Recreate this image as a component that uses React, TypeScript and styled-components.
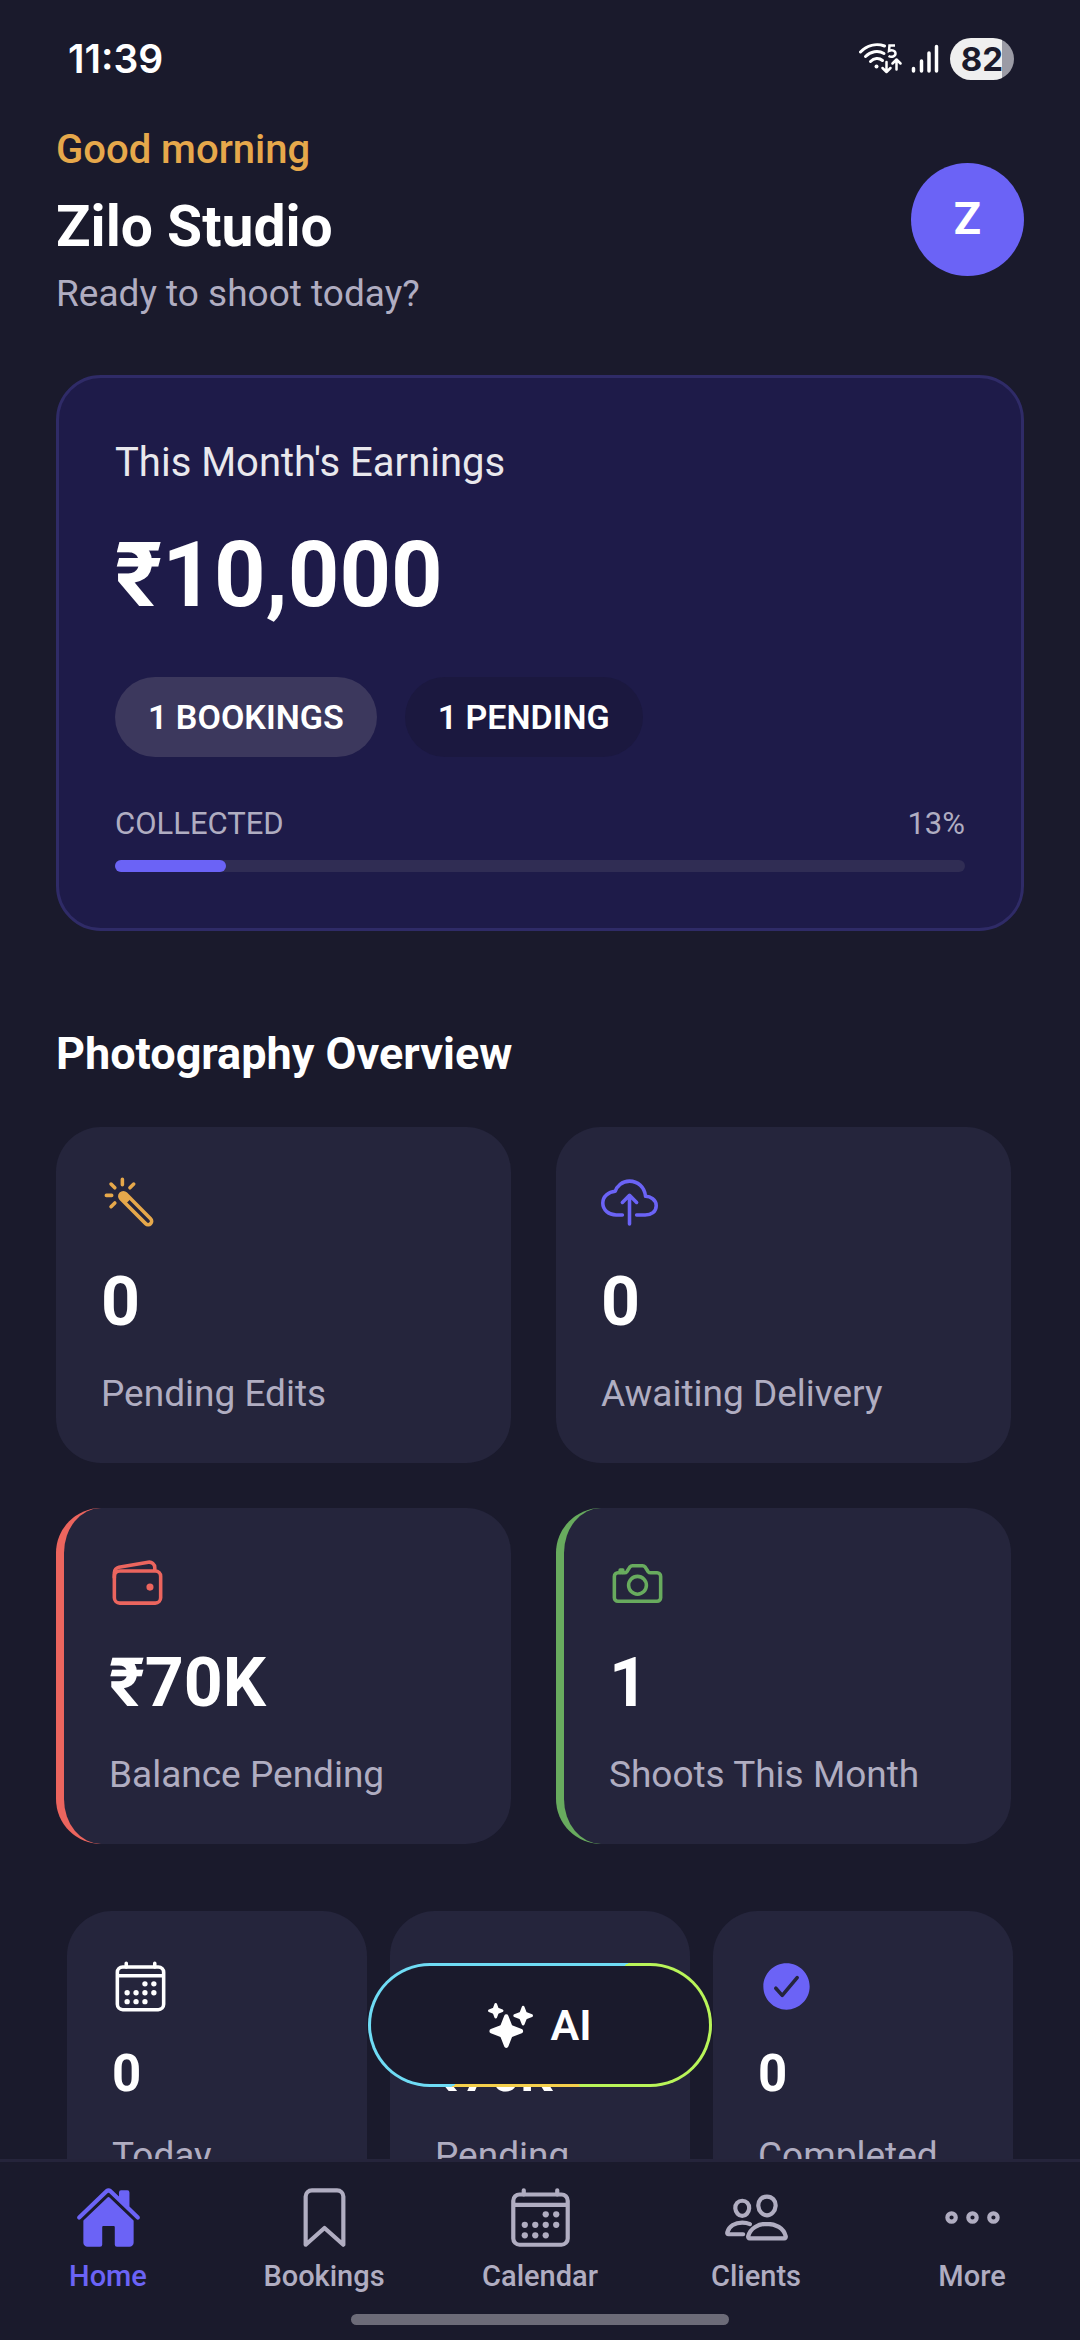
import React from "react";
import styled, { createGlobalStyle } from "styled-components";
import type { IconType } from "react-icons";
import {
  IoBookmarkOutline,
  IoCalendarOutline,
  IoCameraOutline,
  IoCheckmarkCircle,
  IoCloudUploadOutline,
  IoColorWandOutline,
  IoEllipsisHorizontalOutline,
  IoHome,
  IoPeopleOutline,
  IoSparkles,
  IoTimeOutline,
  IoWalletOutline,
} from "react-icons/io5";

const color = {
  page: "#1a1a2c",
  surface: "#25253c",
  hero: "#1e1b49",
  heroBorder: "#2f2b67",
  accent: "#6b63f6",
  amber: "#e6a84b",
  coral: "#ec655e",
  green: "#68ab5e",
  text: "#ffffff",
  muted: "#b0adc1",
};

const GlobalStyle = createGlobalStyle`
  *, *::before, *::after { box-sizing: border-box; }
  body {
    margin: 0;
    background: ${color.page};
    color: ${color.text};
    font-family: Roboto, "Noto Sans", sans-serif;
  }
  h1, h2, p { margin: 0; }
  button { font: inherit; color: inherit; border: 0; padding: 0; cursor: pointer; }
`;

const Screen = styled.div`
  display: flex;
  flex-direction: column;
  height: 100vh;
  background: ${color.page};
`;

/* Status bar */

const StatusBar = styled.div`
  display: flex;
  align-items: center;
  justify-content: space-between;
  padding: 38px 66px 0 68px;
`;

const Clock = styled.span`
  font-family: Inter, Roboto, sans-serif;
  font-size: 39px;
  font-weight: 600;
  line-height: 42px;
`;

const StatusIcons = styled.div`
  display: flex;
  align-items: center;
  gap: 9px;
`;

const Battery = styled.span`
  display: flex;
  align-items: center;
  justify-content: center;
  width: 64px;
  height: 42px;
  margin-left: 2px;
  border-radius: 21px;
  background: linear-gradient(to right, #efefef 82%, #9b9ba5 82%);
  color: ${color.page};
  font-family: Inter, Roboto, sans-serif;
  font-size: 33px;
  font-weight: 700;
  line-height: 42px;
`;

/* Scrolling content */

const Viewport = styled.div`
  position: relative;
  flex: 1;
  min-height: 0;
`;

const Content = styled.main`
  height: 100%;
  overflow-y: auto;
  scrollbar-width: none;
  padding: 42px 56px 160px;
`;

const Header = styled.header`
  display: flex;
  align-items: center;
  justify-content: space-between;
`;

const Greeting = styled.p`
  color: ${color.amber};
  font-size: 40px;
  font-weight: 500;
  line-height: 56px;
`;

const StudioName = styled.h1`
  margin: 16px 0 12px;
  font-size: 57px;
  font-weight: 700;
  line-height: 66px;
`;

const Prompt = styled.p`
  color: ${color.muted};
  font-size: 37px;
  line-height: 44px;
`;

const Avatar = styled.button`
  width: 113px;
  height: 113px;
  border-radius: 50%;
  background: ${color.accent};
  font-size: 45px;
  font-weight: 700;
  line-height: 54px;
`;

/* Earnings card */

const EarningsCard = styled.section`
  margin-top: 59px;
  padding: 56px;
  border: 3px solid ${color.heroBorder};
  border-radius: 45px;
  background: ${color.hero};
`;

const EarningsTitle = styled.h2`
  color: #e9e8ed;
  font-size: 40px;
  font-weight: 400;
  line-height: 58px;
`;

const Amount = styled.p`
  margin: 16px 0 33px;
  font-size: 90px;
  font-weight: 700;
  line-height: 136px;
`;

const Pills = styled.div`
  display: flex;
  gap: 28px;
`;

const Pill = styled.span<{ $dim?: boolean }>`
  padding: 0 33px;
  border-radius: 40px;
  background: ${({ $dim }) => ($dim ? "#1b183f" : "#3c385d")};
  font-size: 34px;
  font-weight: 600;
  line-height: 80px;
`;

const ProgressLabels = styled.div`
  display: flex;
  justify-content: space-between;
  margin: 44px 0 13px;
  color: ${color.muted};
  font-size: 31px;
  line-height: 46px;
`;

const Track = styled.div`
  height: 12px;
  border-radius: 6px;
  background: #302d54;
`;

const Fill = styled.div`
  height: 100%;
  border-radius: 6px;
  background: ${color.accent};
`;

/* Statistics */

const SectionTitle = styled.h2`
  margin: 96px 0 46px;
  font-size: 45px;
  font-weight: 700;
  line-height: 54px;
`;

const StatGrid = styled.div`
  display: grid;
  grid-template-columns: 47% 47%;
  gap: 45px;
`;

const MiniGrid = styled.div`
  display: grid;
  grid-template-columns: repeat(3, 1fr);
  gap: 23px;
  margin-top: 67px;
  padding: 0 11px;
`;

const StatCard = styled.article<{ $edge?: string }>`
  padding: 45px;
  border-radius: 45px;
  border-left: ${({ $edge }) => ($edge ? `8px solid ${$edge}` : "0")};
  background: ${color.surface};
`;

const IconSlot = styled.div<{ $tint: string }>`
  display: flex;
  align-items: center;
  height: 60px;
  color: ${({ $tint }) => $tint};
`;

const StatValue = styled.p<{ $small?: boolean }>`
  margin: ${({ $small }) => ($small ? "28px 0" : "30px 0 28px")};
  font-size: ${({ $small }) => ($small ? 51 : 68)}px;
  font-weight: 700;
  line-height: ${({ $small }) => ($small ? 60 : 80)}px;
`;

const StatLabel = styled.p`
  color: ${color.muted};
  font-size: 37px;
  line-height: 48px;
`;

/* Floating assistant button */

const AiButton = styled.button`
  position: absolute;
  left: 50%;
  bottom: 72px;
  transform: translateX(-50%);
  display: flex;
  width: 344px;
  height: 124px;
  padding: 3px;
  border-radius: 62px;
  background: conic-gradient(
    #6fdcf5 55deg,
    #b9f559 55deg 147deg,
    #f4cf4c 147deg 235deg,
    #6fdcf5 235deg
  );
`;

const AiFace = styled.span`
  flex: 1;
  display: flex;
  align-items: center;
  justify-content: center;
  gap: 17px;
  border-radius: 59px;
  background: ${color.page};
  font-size: 43px;
  font-weight: 600;
  line-height: 54px;
`;

/* Bottom navigation */

const BottomBar = styled.footer`
  padding: 22px 0 15px;
  border-top: 3px solid #25243b;
`;

const Tabs = styled.nav`
  display: grid;
  grid-template-columns: repeat(5, 1fr);
`;

const Tab = styled.a<{ $active?: boolean }>`
  display: flex;
  flex-direction: column;
  align-items: center;
  gap: 8px;
  color: ${({ $active }) => ($active ? color.accent : color.muted)};
  font-size: 29px;
  font-weight: 500;
  line-height: 34px;
  text-decoration: none;
`;

const HomeIndicator = styled.div`
  width: 35%;
  height: 11px;
  margin: 21px auto 0;
  border-radius: 6px;
  background: #6c6b78;
`;

function WifiIcon() {
  return (
    <svg width="43" height="32" viewBox="0 0 43 32" fill="none" stroke="#fff" strokeLinecap="round" aria-hidden="true">
      <g strokeWidth="3">
        <path d="M1.5 9C8 2.500 17 0 25.500 3" />
        <path d="M6.500 13.500C11.500 8.500 19 7 25 10.500" />
        <path d="M11.500 18.500C15 15 20 14.500 23.500 17.500" />
      </g>
      <circle cx="17.500" cy="23.500" r="2" fill="#fff" stroke="none" />
      <path d="M36 2.500H30.500L30 8C33 6.500 36.500 7.500 36.500 10.500C36.500 13.500 32.500 14.500 29.500 13" strokeWidth="2.500" strokeLinecap="butt" />
      <g strokeWidth="2.500" strokeLinejoin="round">
        <path d="M27.500 19V28.500M23.500 25L27.500 29L31.500 25" />
        <path d="M37.500 26.500V17M33.500 20.500L37.500 16.500L41.500 20.500" />
      </g>
    </svg>
  );
}

function SignalIcon() {
  return (
    <svg width="28" height="30" viewBox="0 0 28 30" stroke="#fff" strokeWidth="3.500" strokeLinecap="round" aria-hidden="true">
      <path d="M2.500 24.500V27M10.500 17V27M18 9V27M25.500 2.500V27" />
    </svg>
  );
}

type Stat = { icon: IconType; tint: string; value: string; label: string; edge?: string };

const overview: Stat[] = [
  { icon: IoColorWandOutline, tint: color.amber, value: "0", label: "Pending Edits" },
  { icon: IoCloudUploadOutline, tint: color.accent, value: "0", label: "Awaiting Delivery" },
  { icon: IoWalletOutline, tint: color.coral, value: "₹70K", label: "Balance Pending", edge: color.coral },
  { icon: IoCameraOutline, tint: color.green, value: "1", label: "Shoots This Month", edge: color.green },
];

const bookings: Stat[] = [
  { icon: IoCalendarOutline, tint: color.text, value: "0", label: "Today" },
  { icon: IoTimeOutline, tint: color.amber, value: "₹70K", label: "Pending" },
  { icon: IoCheckmarkCircle, tint: color.accent, value: "0", label: "Completed" },
];

const tabs: { icon: IconType; label: string }[] = [
  { icon: IoHome, label: "Home" },
  { icon: IoBookmarkOutline, label: "Bookings" },
  { icon: IoCalendarOutline, label: "Calendar" },
  { icon: IoPeopleOutline, label: "Clients" },
  { icon: IoEllipsisHorizontalOutline, label: "More" },
];

function StatTile({ stat, small }: { stat: Stat; small?: boolean }) {
  const Icon = stat.icon;
  return (
    <StatCard $edge={stat.edge}>
      <IconSlot $tint={stat.tint}>
        <Icon size={57} aria-hidden="true" />
      </IconSlot>
      <StatValue $small={small}>{stat.value}</StatValue>
      <StatLabel>{stat.label}</StatLabel>
    </StatCard>
  );
}

export default function App() {
  const collected = 13;
  return (
    <>
      <GlobalStyle />
      <Screen>
        <StatusBar>
          <Clock>11:39</Clock>
          <StatusIcons>
            <WifiIcon />
            <SignalIcon />
            <Battery>82</Battery>
          </StatusIcons>
        </StatusBar>

        <Viewport>
          <Content>
            <Header>
              <div>
                <Greeting>Good morning</Greeting>
                <StudioName>Zilo Studio</StudioName>
                <Prompt>Ready to shoot today?</Prompt>
              </div>
              <Avatar type="button">Z</Avatar>
            </Header>

            <EarningsCard>
              <EarningsTitle>This Month's Earnings</EarningsTitle>
              <Amount>₹10,000</Amount>
              <Pills>
                <Pill>1 BOOKINGS</Pill>
                <Pill $dim>1 PENDING</Pill>
              </Pills>
              <ProgressLabels>
                <span id="collected-label">COLLECTED</span>
                <span>{collected}%</span>
              </ProgressLabels>
              <Track
                role="progressbar"
                aria-labelledby="collected-label"
                aria-valuemin={0}
                aria-valuemax={100}
                aria-valuenow={collected}
              >
                <Fill style={{ width: `${collected}%` }} />
              </Track>
            </EarningsCard>

            <SectionTitle>Photography Overview</SectionTitle>
            <StatGrid>
              {overview.map((stat) => (
                <StatTile key={stat.label} stat={stat} />
              ))}
            </StatGrid>
            <MiniGrid>
              {bookings.map((stat) => (
                <StatTile key={stat.label} stat={stat} small />
              ))}
            </MiniGrid>
          </Content>

          <AiButton type="button">
            <AiFace>
              <IoSparkles size={45} aria-hidden="true" />
              AI
            </AiFace>
          </AiButton>
        </Viewport>

        <BottomBar>
          <Tabs>
            {tabs.map(({ icon: Icon, label }, index) => (
              <Tab key={label} href={`#${label.toLowerCase()}`} $active={index === 0} aria-current={index === 0 ? "page" : undefined}>
                <Icon size={67} aria-hidden="true" />
                {label}
              </Tab>
            ))}
          </Tabs>
          <HomeIndicator />
        </BottomBar>
      </Screen>
    </>
  );
}
